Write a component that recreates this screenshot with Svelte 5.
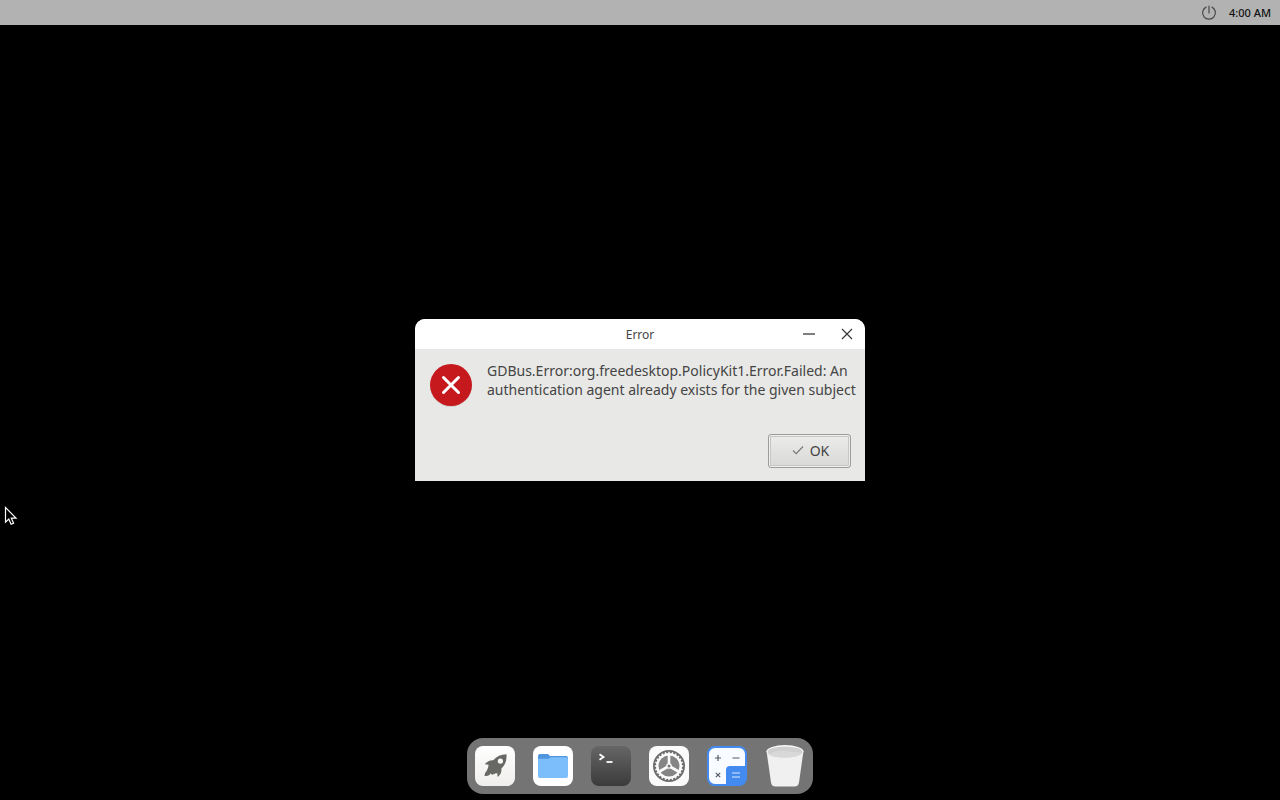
<script>
  let open = $state(true);
  const message =
    'GDBus.Error:org.freedesktop.PolicyKit1.Error.Failed: An authentication agent already exists for the given subject';
  const apps = [
    { id: 'launcher', label: 'Launcher' },
    { id: 'files', label: 'Files' },
    { id: 'terminal', label: 'Terminal' },
    { id: 'settings', label: 'Settings' },
    { id: 'calculator', label: 'Calculator' },
    { id: 'trash', label: 'Trash' }
  ];
  const teeth = Array.from({ length: 24 }, (_, i) => i * 15);
</script>

<div class="desktop">
  <header class="topbar">
    <button class="power" aria-label="Power">
      <svg width="16" height="16" viewBox="0 0 16 16" fill="none" stroke="#484848" stroke-width="1.2" stroke-linecap="round">
        <path d="M8 1v7M5 2.1a6.4 6.4 0 1 0 6 0" />
      </svg>
    </button>
    <time>4:00 AM</time>
  </header>

  {#if open}
    <div class="dialog" role="alertdialog" aria-labelledby="title" aria-describedby="message">
      <div class="titlebar">
        <h1 id="title">Error</h1>
        <div class="controls">
          <button aria-label="Minimize">
            <svg width="16" height="16" viewBox="0 0 16 16"><path d="M2 8h12" stroke="#555" stroke-width="1.6" /></svg>
          </button>
          <button aria-label="Close" onclick={() => (open = false)}>
            <svg width="16" height="16" viewBox="0 0 16 16"><path d="M3 3l10 10M13 3L3 13" stroke="#383838" stroke-width="1.2" /></svg>
          </button>
        </div>
      </div>
      <div class="body">
        <div class="content">
          <svg class="error" width="44" height="46" viewBox="0 0 44 46" aria-hidden="true">
            <circle cx="22" cy="23" r="21" fill="#000" opacity=".1" />
            <circle cx="22" cy="22" r="21" fill="#c6191e" />
            <path d="M14.5 14.5l15 15M29.5 14.5l-15 15" stroke="#fff" stroke-width="3" stroke-linecap="round" />
          </svg>
          <p id="message">{message}</p>
        </div>
        <div class="actions">
          <button class="ok" onclick={() => (open = false)}>
            <svg width="16" height="16" viewBox="0 0 16 16" fill="none"><path d="M3 8.5l3.2 3.2L13 4.5" stroke="#777" stroke-width="1.1" /></svg>
            OK
          </button>
        </div>
      </div>
    </div>
  {/if}

  <nav class="dock" aria-label="Dock">
    {#each apps as app (app.id)}
      <button aria-label={app.label}>
        <svg width="42" height="44" viewBox="0 0 42 44">
          {#if app.id === 'launcher'}
            <defs>
              <linearGradient id="paper" x1="0" y1="0" x2="0" y2="1"><stop offset="0" stop-color="#fff" /><stop offset="1" stop-color="#efeeec" /></linearGradient>
            </defs>
            <rect x="1" y="2" width="40" height="40" rx="8" fill="url(#paper)" />
            <path fill="#686865" fill-rule="evenodd" d="M32.500 10.200C27 10.300 22.500 12.300 19.200 16.200C15.800 16 13 17.500 10.800 20.200L14.500 20.700C14.500 23.200 13.600 24.800 12.700 26.400L18.200 30.800C20 29.900 21.500 29.300 23.300 29.300L23.600 33C26.500 30.900 27.800 28.200 27.400 24.500C31.200 21 32.800 16.500 32.500 10.200ZM26.400 14.600a2.600 2.600 0 1 1 0 5.200a2.600 2.600 0 0 1 0-5.200Z" />
            <path fill="#686865" d="M14.200 26.400c-2.800.3-3.400 3-3.700 5.700c2.600-.1 5.800-.5 6.300-3.700Z" />
          {:else if app.id === 'files'}
            <rect x="1" y="2" width="40" height="40" rx="8" fill="#fff" />
            <path d="M6 12q0-2 2-2h8l2 2h16q2 0 2 2v8H6Z" fill="#4f96df" />
            <path d="M6 16q0-1.200 1.200-1.200h9.300l2.200-1.600H34q2 0 2 2V32q0 2-2 2H8q-2 0-2-2Z" fill="#7cbdfc" />
          {:else if app.id === 'terminal'}
            <defs>
              <linearGradient id="shell" x1="0" y1="0" x2="0" y2="1"><stop offset="0" stop-color="#666" /><stop offset="1" stop-color="#3b3b3b" /></linearGradient>
            </defs>
            <rect x="1" y="2" width="40" height="40" rx="8" fill="url(#shell)" />
            <path d="M9.500 10.300l4 2.700-4 2.700" fill="none" stroke="#fff" stroke-width="1.800" />
            <path d="M16.500 18h6" stroke="#fff" stroke-width="1.800" />
          {:else if app.id === 'settings'}
            <rect x="1" y="2" width="40" height="40" rx="8" fill="#fbfbfb" />
            <circle cx="21" cy="22" r="14.500" fill="none" stroke="#6c6c6c" stroke-width="3" />
            <g stroke="#fbfbfb" stroke-width="1.500">
              {#each teeth as angle}
                <path d="M21 7.800v2.400" transform="rotate({angle} 21 22)" />
              {/each}
            </g>
            <circle cx="21" cy="22" r="10.500" fill="#858585" />
            <path d="M21 22V11M21 22l-9.500 5.500M21 22l9.500 5.500" stroke="#fbfbfb" stroke-width="2.600" />
            <circle cx="21" cy="22" r="2.800" fill="#fbfbfb" />
            <circle cx="21" cy="22" r="1.500" fill="#777" />
          {:else if app.id === 'calculator'}
            <rect x="2" y="3" width="38" height="38" rx="7" fill="#f8fbff" stroke="#438bf0" stroke-width="2" />
            <path d="M20 40V26q0-4 4-4h16v12q0 7-7 7H20Z" fill="#438bf0" />
            <path d="M9 14h6M12 11v6M26.500 14h7M9.800 28.800l4.400 4.400M14.200 28.800l-4.400 4.400" stroke="#555d68" stroke-width="1.200" />
            <path d="M26 29h8M26 33h8" stroke="#d9e9ff" stroke-width="1.200" />
          {:else}
            <path d="M2.500 7L7 38.500q.6 3.800 4.500 4.100h19q3.900-.3 4.500-4.100L39.500 7Z" fill="#f0f0f0" />
            <ellipse cx="21" cy="7.500" rx="18.500" ry="6.500" fill="#f7f7f7" />
            <ellipse cx="21" cy="8" rx="17.500" ry="5.500" fill="#cfcfcf" />
            <path d="M4.500 10q9.500-4.500 17.500-3t16 1.500q-3 5-17 5T4.500 10Z" fill="#d8d8d8" />
          {/if}
        </svg>
      </button>
    {/each}
  </nav>

  <svg class="pointer" width="14" height="20" viewBox="0 0 14 20" aria-hidden="true">
    <path d="M1.500 1.500v14.700l3.300-3.100 2.300 5.200 2.500-1.100-2.300-5h4.700Z" fill="#000" stroke="#fff" stroke-width="1.200" />
  </svg>
</div>

<style>
  :global(body) {
    margin: 0;
    background: #000;
  }
  .desktop {
    position: relative;
    display: grid;
    min-height: 100vh;
    grid-template: minmax(0, 1fr) / minmax(0, 1fr);
    overflow: hidden;
    font-family: "Noto Sans", sans-serif;
    color: #444;
  }
  .topbar,
  .dialog,
  .dock {
    grid-area: 1 / 1;
  }
  button {
    display: flex;
    align-items: center;
    justify-content: center;
    margin: 0;
    padding: 0;
    border: 0;
    background: none;
    font: inherit;
    color: inherit;
  }
  svg {
    display: block;
  }
  .topbar {
    align-self: start;
    display: flex;
    align-items: center;
    justify-content: flex-end;
    gap: 12px;
    height: 25px;
    padding: 0 9px;
    background: #b2b2b2;
    color: #111;
    font-size: 11px;
    font-weight: 500;
  }
  .dialog {
    place-self: center;
    width: 450px;
    max-width: 100%;
    border-radius: 10px 10px 0 0;
    overflow: hidden;
    background: #e8e8e6;
  }
  .titlebar {
    display: grid;
    grid-template-columns: 1fr auto 1fr;
    align-items: center;
    height: 30px;
    background: #fff;
  }
  h1 {
    grid-column: 2;
    margin: 0;
    font-size: 12px;
    font-weight: 400;
  }
  .controls {
    display: flex;
    justify-content: flex-end;
    gap: 22px;
    padding-right: 10px;
  }
  .body {
    padding: 12px 14px 13px;
  }
  .content {
    display: flex;
    gap: 14px;
    margin-right: -8px;
  }
  .error {
    flex: none;
    margin-top: 2px;
  }
  p {
    margin: 0;
    font-size: 14px;
    line-height: 19px;
  }
  .actions {
    display: flex;
    justify-content: flex-end;
    margin-top: 25px;
  }
  .ok {
    gap: 4px;
    width: 83px;
    height: 34px;
    padding-bottom: 2px;
    border: 1px solid #9c9c9b;
    border-radius: 3px;
    background: linear-gradient(#ececeb, #d8d8d7);
    box-shadow: inset 0 0 0 1px #efefee, inset 0 0 0 2px #c6c6c5;
    font-size: 14px;
  }
  .dock {
    place-self: end center;
    display: flex;
    gap: 16px;
    margin-bottom: 6px;
    padding: 6px 7px;
    border-radius: 16px;
    background: #747474;
  }
  .pointer {
    position: absolute;
    left: 4px;
    top: 506px;
  }
</style>
